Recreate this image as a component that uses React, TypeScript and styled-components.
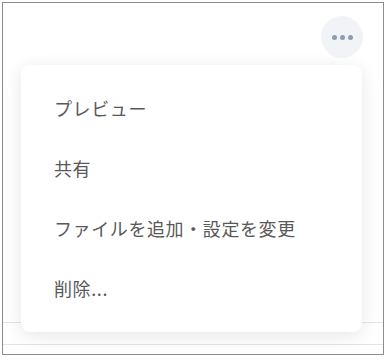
import React from 'react'
import styled, { createGlobalStyle } from 'styled-components'

const GlobalStyle = createGlobalStyle`
    html, body {
        margin: 0;
        padding: 0;
        background: #ffffff;
    }
    body {
        font-family: 'Noto Sans CJK JP', 'Noto Sans', sans-serif;
    }
`

const items = ['プレビュー', '共有', 'ファイルを追加・設定を変更', '削除...']

const App = () => {
    return (
        <>
            <GlobalStyle />
            <Frame>
                <Header>
                    <MoreButton aria-label='more'>
                        <Dot />
                        <Dot />
                        <Dot />
                    </MoreButton>
                </Header>
                <Rows>
                    <RowLine />
                    <RowLine />
                </Rows>
                <Menu>
                    {items.map((label) => (
                        <MenuItem key={label}>{label}</MenuItem>
                    ))}
                </Menu>
            </Frame>
        </>
    )
}

const Frame = styled.div`
    position: relative;
    margin: 2px 0 0 2px;
    width: 380px;
    height: 351px;
    border: 1px solid #8c8c8c;
    background: #ffffff;
    display: flex;
    flex-direction: column;
`
const Header = styled.div`
    display: flex;
    justify-content: flex-end;
    padding: 13px 20px 0 0;
`
const MoreButton = styled.button`
    width: 42px;
    height: 42px;
    border: none;
    border-radius: 50%;
    background: #f1f3f6;
    display: flex;
    align-items: center;
    justify-content: center;
    gap: 3px;
    padding: 0;
    cursor: pointer;
`
const Dot = styled.span`
    width: 5px;
    height: 5px;
    border-radius: 50%;
    background: #8d9db1;
`
const Rows = styled.div`
    margin-top: auto;
    display: flex;
    flex-direction: column;
    gap: 21px;
    padding-bottom: 9px;
`
const RowLine = styled.div`
    height: 1px;
    background: #e4e4e4;
`
const Menu = styled.ul`
    position: absolute;
    left: 18px;
    top: 62px;
    width: 341px;
    margin: 0;
    padding: 13px 0 14px;
    list-style: none;
    background: #ffffff;
    border-radius: 9px;
    box-shadow: 0 4px 18px rgba(0, 0, 0, 0.1);
    box-sizing: border-box;
`
const MenuItem = styled.li`
    height: 60px;
    display: flex;
    align-items: center;
    padding: 0 33px;
    font-size: 18px;
    color: #595959;
    letter-spacing: 0.6px;
    cursor: pointer;
`

export default App
